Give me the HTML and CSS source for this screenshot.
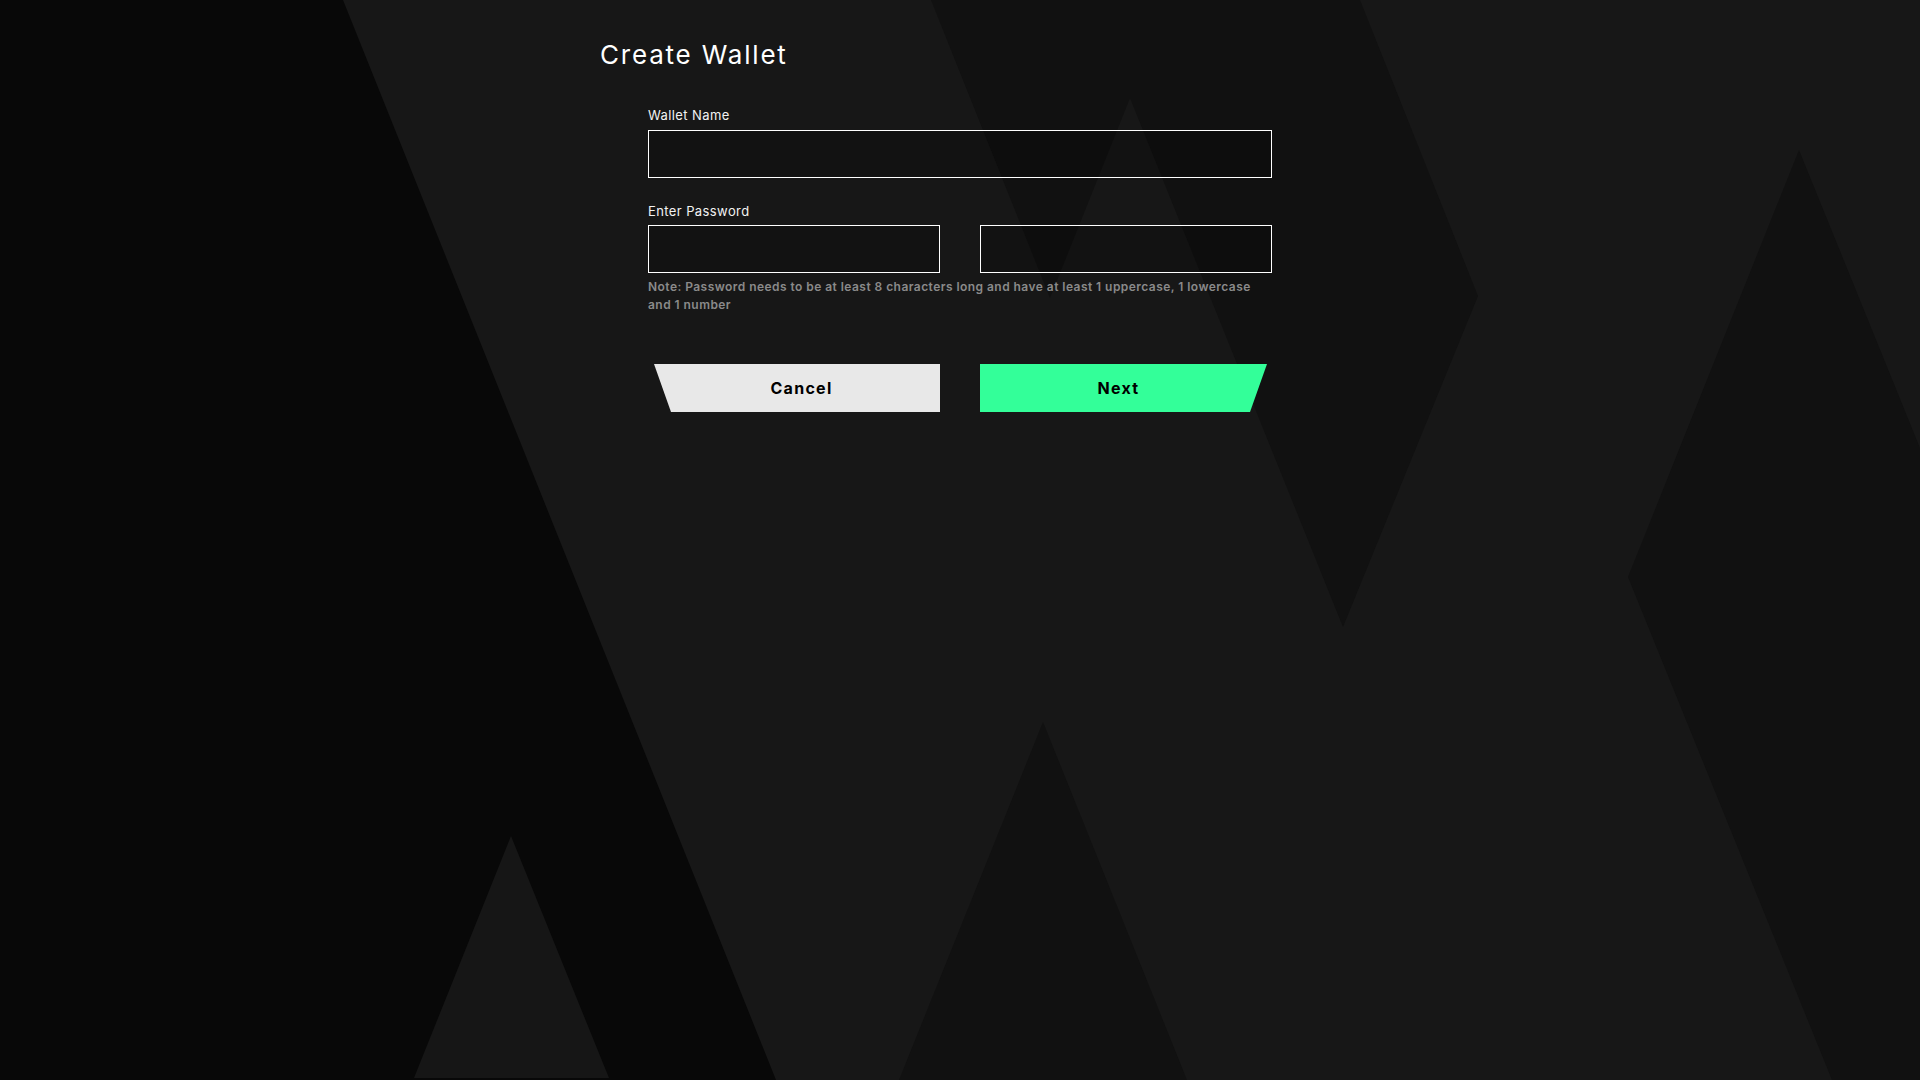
FILE: index.html
```html
<!DOCTYPE html>
<html lang="en">
<head>
<meta charset="utf-8">
<title>Create Wallet</title>
<link rel="stylesheet" href="styles.css">
</head>
<body>
<svg class="backdrop" viewBox="0 0 1920 1080" preserveAspectRatio="none" aria-hidden="true">
  <polygon class="shade-deep" points="0,0 343,0 776,1080 0,1080"/>
  <polygon class="shade-soft" points="511,836 414,1078 609,1078"/>
  <polygon class="shade-dark" points="931,0 1360,0 1478,296 1343,627 1130,98 1050,298"/>
  <polygon class="shade-dark" points="1043,722 899,1080 1187,1080"/>
  <polygon class="shade-dark" points="1799,150 1920,448 1920,1080 1832,1080 1628,577"/>
</svg>
<main class="page">
  <h1 class="title">Create Wallet</h1>
  <form class="form">
    <div class="field">
      <label class="label" for="wallet-name">Wallet Name</label>
      <input class="input" id="wallet-name" type="text">
    </div>
    <div class="field field-gap">
      <label class="label" for="password">Enter Password</label>
      <div class="pair">
        <input class="input" id="password" type="password">
        <input class="input" type="password" aria-label="Confirm Password">
      </div>
      <p class="note">Note: Password needs to be at least 8 characters long and have at least 1 uppercase, 1 lowercase and 1 number</p>
    </div>
    <div class="pair actions">
      <button type="button" class="btn btn-cancel">Cancel</button>
      <button type="submit" class="btn btn-next">Next</button>
    </div>
  </form>
</main>
</body>
</html>
```

FILE: styles.css
```css
* {
  box-sizing: border-box;
}

html,
body {
  margin: 0;
  height: 100%;
}

body {
  position: relative;
  overflow: hidden;
  background: #171717;
  color: #ffffff;
  font-family: Inter, "Open Sans", "DejaVu Sans", sans-serif;
}

.backdrop {
  position: absolute;
  top: 0;
  left: 0;
  width: 100%;
  height: 100%;
  display: block;
}

.shade-deep {
  fill: #080808;
}

.shade-soft {
  fill: #161616;
}

.shade-dark {
  fill: #111111;
}

.page {
  position: relative;
  width: 720px;
  margin: 0 auto;
  padding-top: 39px;
}

.title {
  margin: 0;
  font-size: 26px;
  line-height: 32px;
  font-weight: 400;
  letter-spacing: 1.8px;
  color: #ffffff;
}

.form {
  display: flex;
  flex-direction: column;
  padding: 36px 48px 0;
}

.field {
  display: flex;
  flex-direction: column;
}

.field-gap {
  margin-top: 25px;
}

.label {
  font-size: 13px;
  line-height: 16px;
  font-weight: 400;
  letter-spacing: 0.4px;
  margin-bottom: 7px;
  color: #f2f2f2;
}

.field-gap .label {
  margin-bottom: 6px;
}

.input {
  display: block;
  width: 100%;
  height: 48px;
  margin: 0;
  padding: 0 14px;
  border: 1px solid #ffffff;
  border-radius: 0;
  background: rgba(0, 0, 0, 0.2);
  color: #ffffff;
  font: inherit;
  font-size: 15px;
  outline: none;
}

.pair {
  display: grid;
  grid-template-columns: 1fr 1fr;
  column-gap: 40px;
}

.note {
  max-width: 608px;
  margin: 5px 0 0;
  font-size: 12px;
  line-height: 18px;
  font-weight: 600;
  letter-spacing: 0.45px;
  color: #8a8a8a;
}

.actions {
  margin-top: 50px;
}

.btn {
  display: flex;
  align-items: center;
  justify-content: center;
  height: 48px;
  margin: 0;
  border: none;
  border-radius: 0;
  font-family: inherit;
  font-size: 16px;
  font-weight: 700;
  letter-spacing: 1.3px;
  color: #000000;
  cursor: pointer;
}

.btn-cancel {
  background: #e8e8e8;
  padding-left: 21px;
  clip-path: polygon(6px 0, 100% 0, 100% 100%, 23px 100%);
}

.btn-next {
  background: #33ff99;
  padding-right: 21px;
  clip-path: polygon(0 0, calc(100% - 5px) 0, calc(100% - 22px) 100%, 0 100%);
}
```
